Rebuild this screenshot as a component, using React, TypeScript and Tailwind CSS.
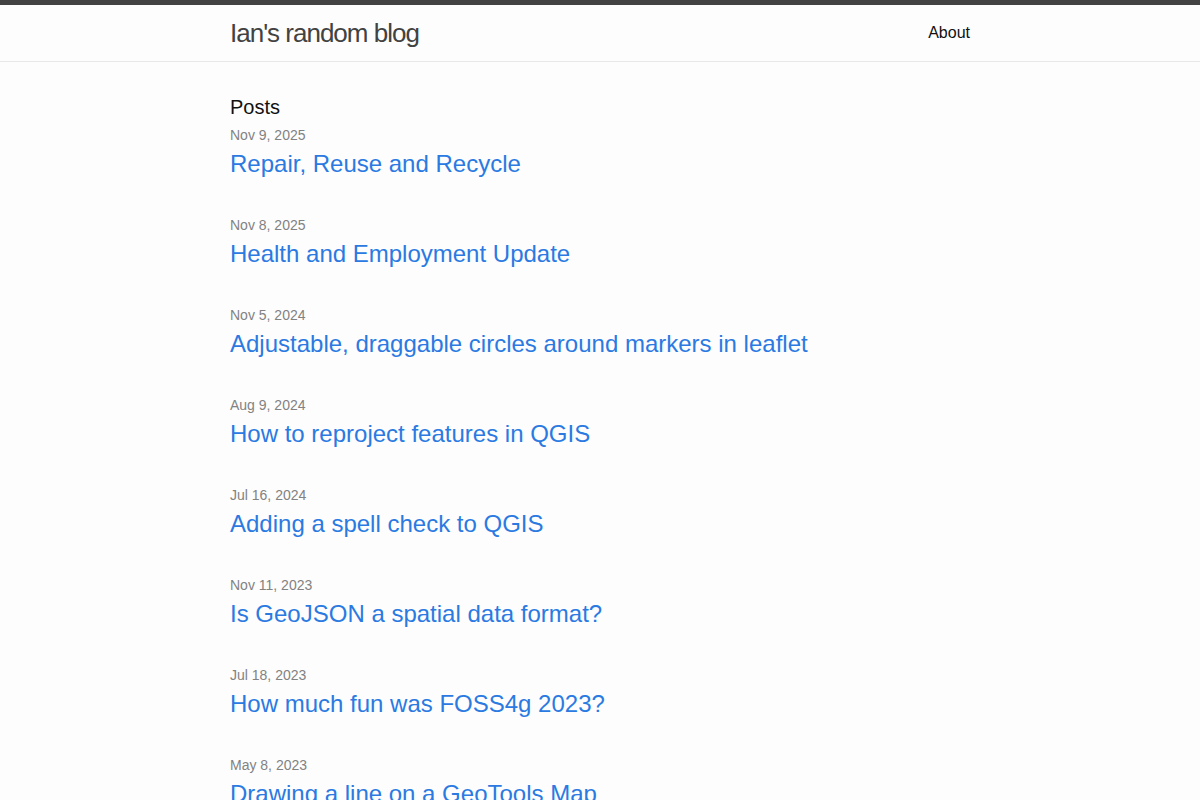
const posts = [
  { date: "Nov 9, 2025", title: "Repair, Reuse and Recycle" },
  { date: "Nov 8, 2025", title: "Health and Employment Update" },
  { date: "Nov 5, 2024", title: "Adjustable, draggable circles around markers in leaflet" },
  { date: "Aug 9, 2024", title: "How to reproject features in QGIS" },
  { date: "Jul 16, 2024", title: "Adding a spell check to QGIS" },
  { date: "Nov 11, 2023", title: "Is GeoJSON a spatial data format?" },
  { date: "Jul 18, 2023", title: "How much fun was FOSS4g 2023?" },
  { date: "May 8, 2023", title: "Drawing a line on a GeoTools Map" },
];

export default function App() {
  return (
    <div
      className="min-h-screen bg-[#fdfdfd] text-[#111111] text-[16px]"
      style={{ fontFamily: '"Liberation Sans", Arial, Helvetica, sans-serif' }}
    >
      <header className="border-t-[5px] border-t-[#424242] border-b border-b-[#e8e8e8] min-h-[62px]">
        <div className="max-w-[740px] mx-auto flex justify-between items-start pt-[1px]">
          <a href="#" className="text-[26px] leading-[54px] tracking-[-1px] font-light text-[#424242]">
            Ian's random blog
          </a>
          <nav>
            <a href="#" className="leading-[54px] text-[#111111] text-[16px]">
              About
            </a>
          </nav>
        </div>
      </header>
      <main className="max-w-[740px] mx-auto pt-[31px] pb-[30px]">
        <h2 className="text-[20px] leading-[28px] mb-[3px] text-[#111111]">Posts</h2>
        <ul>
          {posts.map((p) => (
            <li key={p.date + p.title} className="mb-[32px]">
              <div className="text-[14px] leading-[22px] text-[#828282]">{p.date}</div>
              <h3 className="text-[24px] leading-[36px]">
                <a href="#" className="block text-[#2a7ae2]">
                  {p.title}
                </a>
              </h3>
            </li>
          ))}
        </ul>
      </main>
    </div>
  );
}
